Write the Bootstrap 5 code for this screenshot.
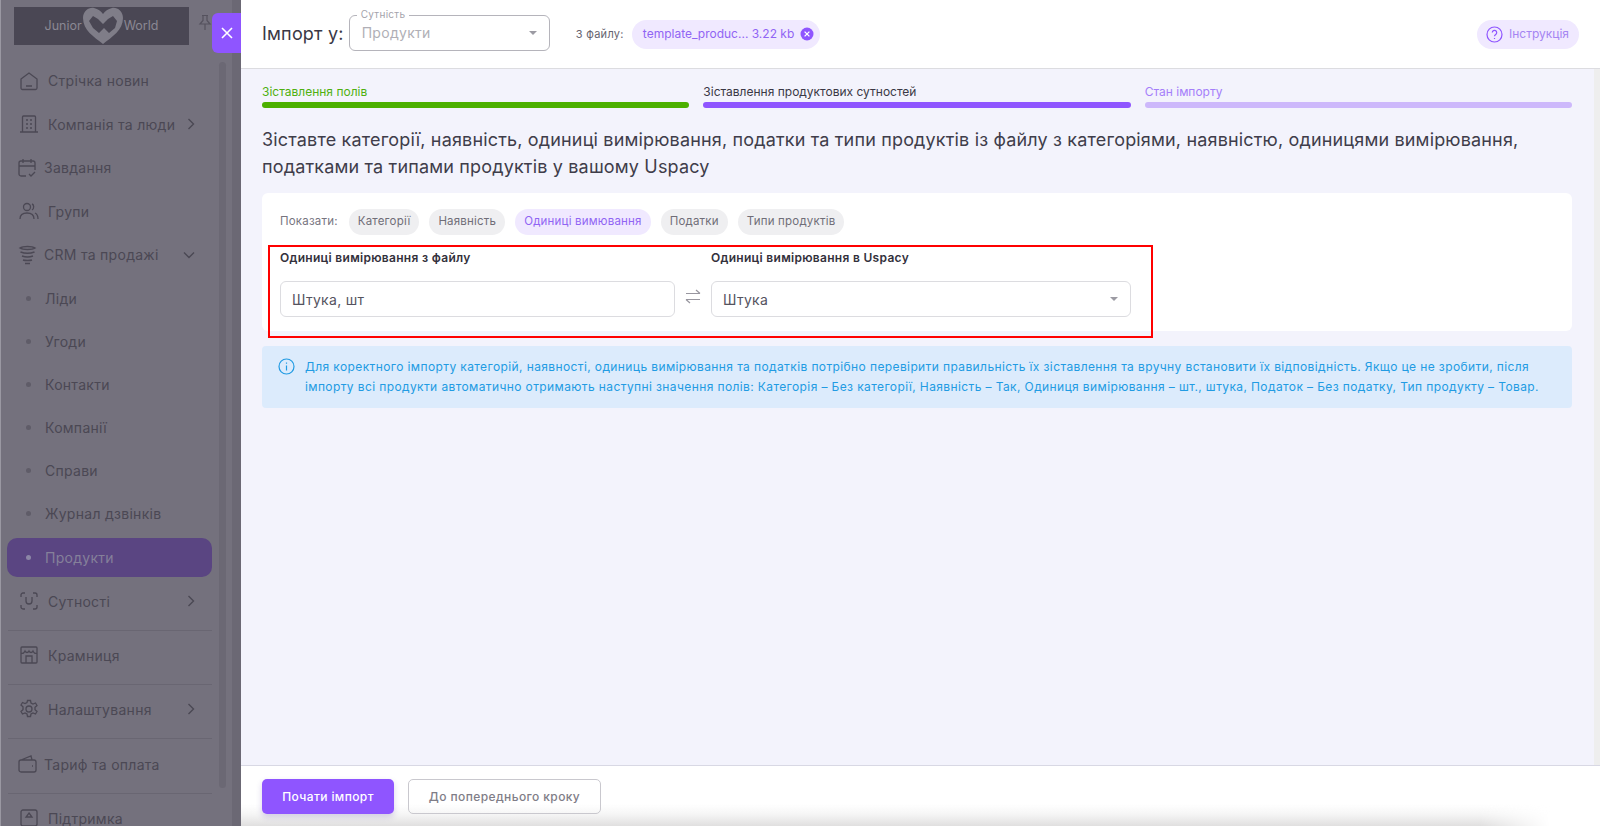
<!DOCTYPE html>
<html lang="uk">

<head>
	<meta charset="UTF-8">
	<meta name="viewport" content="width=device-width, initial-scale=1.0">
	<title>Імпорт</title>
	<link href="https://cdn.jsdelivr.net/npm/bootstrap@5.3.0/dist/css/bootstrap.min.css" rel="stylesheet">
	<style>
		html, body { height: 100%; overflow: hidden; }
		body { font-family: Inter, "Noto Sans", sans-serif; color: #3a3845; background: #fff; }
		.app-root { height: 826px; width: 1600px; overflow: hidden; position: relative; }

		/* dimmed sidebar */
		.side { width: 241px; flex: none; background: #74717d; color: #4b4854; border-left: 1px solid #9a98a2; position: relative; overflow: hidden; }
		.side-top { height: 59px; padding: 7px 0 0 13px; }
		.logo-box { width: 175px; height: 38px; background: #4a4754; color: #8a8893; font-size: 12.5px; }
		.pin-ic { margin: 7px 0 0 9px; }
		.side-scroll { position: absolute; left: 218px; top: 62px; width: 7px; height: 726px; background: #6b6874; border-radius: 4px; }
		.side-strip { position: absolute; left: 231px; top: 0; bottom: 0; width: 9px; background: #6b6874; }
		.side-list { width: 205px; margin: 0 0 0 6px; padding: 0; list-style: none; font-size: 14px; letter-spacing: .28px; white-space: nowrap; }
		.side-item { height: 43.5px; padding-left: 12px; gap: 9px; }
		.side-item.tight { gap: 7px; padding-left: 11px; }
		.side-item.sub { padding-left: 0; height: 43px; gap: 0; }
		.side-dot { width: 5px; height: 5px; background: #5f5c68; border-radius: 50%; margin: 0 14px 0 19px; }
		.side-item.on { background: #5a4582; border-radius: 10px; height: 39px; color: #85809a; margin: 3px 0 3px; }
		.side-item.on .side-dot { background: #8c86a6; }
		.side-chev { margin-left: auto; margin-right: 17px; }
		.side-rule { border-top: 1px solid #696672; margin: 7px 0 3px 1px; height: 0; }
		.side-rule.wide { margin-bottom: 4px; }
		.side-item.plain { height: 43px; }
		.side-ic { flex: none; }

		.close-tab { position: absolute; left: 212px; top: 13px; width: 29px; height: 40px; background: #8f55ff; border-radius: 6px 0 0 6px; z-index: 3; }

		/* import panel */
		.panel { min-width: 0; }
		.panel-head { height: 69px; flex: none; border-bottom: 1px solid #dcdce0; padding: 0 21px 0 21px; background: #fff; }
		.head-title { font-size: 18px; font-weight: 400; color: #3a3845; margin: 0 5px 0 0; white-space: nowrap; letter-spacing: .2px; }
		.entity-wrap { width: 201px; position: relative; margin-top: -3px; margin-right: 26px; }
		.entity-wrap .fake-select { height: 36px; border: 1px solid #b5b4bb; border-radius: 6px; padding: 0 12px; color: #b0afb6; font-size: 14px; letter-spacing: .3px; }
		.entity-tag { position: absolute; left: 8px; top: -7px; background: #fff; padding: 0 4px; font-size: 10px; line-height: 12px; color: #a4a3ab; letter-spacing: .3px; }
		.caret-dn { width: 0; height: 0; border-left: 4px solid transparent; border-right: 4px solid transparent; border-top: 4px solid #9c9ba3; }
		.file-lbl { font-size: 11px; color: #66646f; margin-right: 8px; white-space: nowrap; letter-spacing: .3px; }
		.file-chip { height: 29px; background: #f0e9ff; color: #9065f4; font-size: 12px; border-radius: 15px; padding: 0 6px 0 11px; gap: 6px; }
		.help-chip { height: 29px; background: #f0e9ff; color: #a585f2; font-size: 12px; border-radius: 15px; padding: 0 10px 0 9px; gap: 6px; margin-left: auto; }

		.panel-body { flex: 1 1 auto; background: #f3f3fc; padding: 15px 22px 0 21px; margin-right: 6px; min-height: 0; }
		.panel-gutter { position: absolute; right: 0; top: 69px; width: 6px; height: 696px; background: #eeeeee; }
		.step-row { gap: 14px; }
		.step-name { font-size: 12px; line-height: 15px; height: 18px; white-space: nowrap; }
		.step-bar { height: 6px; border-radius: 3px; }
		.step-a { color: #4fb010; } .step-a .step-bar { background: #4cb000; }
		.step-b { color: #3a3845; } .step-b .step-bar { background: #8f55ff; }
		.step-c { color: #a57ffa; } .step-c .step-bar { background: #cdb8fb; }
		.match-title { font-size: 18px; line-height: 27px; font-weight: 400; margin: 18px 0 13px; color: #3f3d4a; letter-spacing: .165px; }
		.match-card { background: #fff; border-radius: 6px; padding: 16px 18px 14px 18px; height: 138px; }
		.show-lbl { font-size: 11.5px; color: #77757f; margin-right: 11px; letter-spacing: .2px; }
		.pick { height: 26px; border-radius: 13px; padding: 0 9px; background: #efeff1; color: #706e78; font-size: 11.5px; margin-right: 10px; letter-spacing: .2px; }
		.pick.now { background: #f0e9ff; color: #9065f4; }
		.map-cols { margin-top: 15px; }
		.map-left { width: 395px; }
		.map-right { width: 420px; }
		.map-arrows { width: 36px; padding-top: 26px; }
		.map-lbl { font-size: 12px; font-weight: 600; line-height: 15px; color: #33313c; margin-bottom: 16px; letter-spacing: .3px; }
		.map-field { height: 36px; border: 1px solid #dcdce0; border-radius: 6px; padding: 0 12px 0 11px; font-size: 14px; color: #55535e; letter-spacing: .3px; }
		.red-frame { position: absolute; left: 268px; top: 245px; width: 885px; height: 93px; border: 2px solid #f00; pointer-events: none; }
		.hint-box { background: #dcebfc; color: #229be3; font-size: 12px; line-height: 20px; border-radius: 4px; margin-top: 15px; padding: 11px 16px 11px 16px; height: 62px; gap: 10px; letter-spacing: .39px; }
		.hint-box svg { flex: none; margin-top: 1px; }

		.panel-foot { height: 61px; flex: none; border-top: 1px solid #d8d8e4; padding: 13px 0 0 21px; gap: 14px; background: #fff; position: relative; }
		.panel-foot::after { content: ""; position: absolute; left: 0; right: 50px; bottom: 0; height: 22px; background: linear-gradient(transparent, #f6f6f6 45%, #e0dfdf); -webkit-mask-image: linear-gradient(to right, #000 calc(100% - 70px), transparent); mask-image: linear-gradient(to right, #000 calc(100% - 70px), transparent); }
		.go-btn { height: 35px; width: 132px; padding: 0; background: #8f55ff; border: 0; color: #fff; font-size: 12px; font-weight: 500; border-radius: 5px; letter-spacing: .4px; box-shadow: 0 3px 6px rgba(70, 40, 150, .2); position: relative; z-index: 1; }
		.back-btn { height: 35px; width: 193px; padding: 0; background: transparent; border: 1px solid #c9c8ce; color: #7f7d87; font-size: 12px; font-weight: 500; border-radius: 5px; letter-spacing: .4px; position: relative; z-index: 1; }
	</style>
</head>

<body>

	<div class="app-root d-flex">

		<!-- sidebar behind the overlay -->
		<aside class="side">
			<div class="side-top d-flex">
				<div class="logo-box d-flex align-items-center justify-content-center">
					<span>Junior</span>
					<svg width="42" height="38" viewBox="0 0 42 38"><path d="M21 37C12 30 1 23 1 11 1 4 7 0 12 1c4 1 7 3 9 6 2-3 5-5 9-6 5-1 11 3 11 10 0 12-11 19-20 26z" fill="#7f7d88"/><path d="M7 14l4-5 5 3 5 5 5-5 5-3 4 5-2 7-6 5-5-5-5 5-6-5z" fill="#4a4754"/></svg>
					<span>World</span>
				</div>
				<svg class="pin-ic" width="14" height="18" viewBox="0 0 14 18" fill="none" stroke="#55525e" stroke-width="1.2"><path d="M4 1.500h6M5 1.500v5L2 10h10L9 6.500v-5M7 10v6"/></svg>
			</div>
			<ul class="side-list">
				<li class="side-item d-flex align-items-center"><svg class="side-ic" width="20" height="20" viewBox="0 0 20 20" fill="none" stroke="#4b4854" stroke-width="1.3"><path d="M2 8l8-6 8 6v9a1.500 1.500 0 0 1-1.500 1.500h-13A1.500 1.500 0 0 1 2 17zM7 15h6"/></svg><span>Стрічка новин</span></li>
				<li class="side-item d-flex align-items-center"><svg class="side-ic" width="20" height="20" viewBox="0 0 20 20" fill="none" stroke="#4b4854" stroke-width="1.3"><path d="M3.500 18V3a1 1 0 0 1 1-1h11a1 1 0 0 1 1 1v15M1 18h18M7 6h2M11 6h2M7 10h2M11 10h2M7 14h2M11 14h2"/></svg><span>Компанія та люди</span><svg class="side-chev" width="8" height="12" viewBox="0 0 8 12" fill="none" stroke="#4b4854" stroke-width="1.400"><path d="M1.500 1l5 5-5 5"/></svg></li>
				<li class="side-item tight d-flex align-items-center"><svg class="side-ic" width="19" height="20" viewBox="0 0 19 20" fill="none" stroke="#4b4854" stroke-width="1.3"><path d="M8 18H3a2 2 0 0 1-2-2V5a2 2 0 0 1 2-2h12a2 2 0 0 1 2 2v7M1 8h16M5 1v4M13 1v4M11 16l2 2 4-4"/></svg><span>Завдання</span></li>
				<li class="side-item d-flex align-items-center"><svg class="side-ic" width="20" height="20" viewBox="0 0 20 20" fill="none" stroke="#4b4854" stroke-width="1.3"><circle cx="8" cy="6" r="3.500"/><path d="M1 18c0-4 3-6 7-6s7 2 7 6M13 3c2 .5 2.500 4.500 0 6M16 12c2 1 3 3 3 6"/></svg><span>Групи</span></li>
				<li class="side-item tight d-flex align-items-center"><svg class="side-ic" width="19" height="20" viewBox="0 0 19 20" fill="none" stroke="#4b4854" stroke-width="1.5"><path d="M2 3c3-2 12-2 15 0-3 2-12 2-15 0zM2.500 7c4 1.500 10 1.500 14 0M4 11c3 1 8 1 11 0M5 15c2 .7 7 .7 9 0M7 18.500h5"/></svg><span>CRM та продажі</span><svg class="side-chev" width="12" height="8" viewBox="0 0 12 8" fill="none" stroke="#4b4854" stroke-width="1.400"><path d="M1 1.500l5 5 5-5"/></svg></li>
				<li class="side-item sub d-flex align-items-center"><span class="side-dot"></span><span>Ліди</span></li>
				<li class="side-item sub d-flex align-items-center"><span class="side-dot"></span><span>Угоди</span></li>
				<li class="side-item sub d-flex align-items-center"><span class="side-dot"></span><span>Контакти</span></li>
				<li class="side-item sub d-flex align-items-center"><span class="side-dot"></span><span>Компанії</span></li>
				<li class="side-item sub d-flex align-items-center"><span class="side-dot"></span><span>Справи</span></li>
				<li class="side-item sub d-flex align-items-center"><span class="side-dot"></span><span>Журнал дзвінків</span></li>
				<li class="side-item sub on d-flex align-items-center"><span class="side-dot"></span><span>Продукти</span></li>
				<li class="side-item plain d-flex align-items-center"><svg class="side-ic" width="20" height="20" viewBox="0 0 20 20" fill="none" stroke="#4b4854" stroke-width="1.3"><path d="M2 6V4a2 2 0 0 1 2-2h2M14 2h2a2 2 0 0 1 2 2v2M18 14v2a2 2 0 0 1-2 2h-2M6 18H4a2 2 0 0 1-2-2v-2M7 6v4a3 3 0 0 0 6 0V6"/></svg><span>Сутності</span><svg class="side-chev" width="8" height="12" viewBox="0 0 8 12" fill="none" stroke="#4b4854" stroke-width="1.400"><path d="M1.500 1l5 5-5 5"/></svg></li>
				<li class="side-rule"></li>
				<li class="side-item plain d-flex align-items-center"><svg class="side-ic" width="20" height="20" viewBox="0 0 20 20" fill="none" stroke="#4b4854" stroke-width="1.3"><path d="M3 2h14a1 1 0 0 1 1 1v14a1 1 0 0 1-1 1H3a1 1 0 0 1-1-1V3a1 1 0 0 1 1-1zM2 8c2 1 3 0 4-2 1 2 3 2 4 0 1 2 3 2 4 0 1 2 2 3 4 2M7 18v-7h6v7"/></svg><span>Крамниця</span></li>
				<li class="side-rule"></li>
				<li class="side-item plain d-flex align-items-center"><svg class="side-ic" width="20" height="20" viewBox="0 0 20 20" fill="none" stroke="#4b4854" stroke-width="1.3"><circle cx="10" cy="10" r="3"/><path d="M8.500 1.500h3l.5 2.500 2 1 2.500-1 1.500 2.500-2 1.700v2.600l2 1.700-1.500 2.500-2.500-1-2 1-.5 2.500h-3l-.5-2.500-2-1-2.500 1-1.500-2.500 2-1.700V7.700l-2-1.700L3.500 3.500l2.500 1 2-1z"/></svg><span>Налаштування</span><svg class="side-chev" width="8" height="12" viewBox="0 0 8 12" fill="none" stroke="#4b4854" stroke-width="1.400"><path d="M1.500 1l5 5-5 5"/></svg></li>
				<li class="side-rule wide"></li>
				<li class="side-item plain tight d-flex align-items-center"><svg class="side-ic" width="19" height="20" viewBox="0 0 19 20" fill="none" stroke="#4b4854" stroke-width="1.3"><path d="M3 6h13a2 2 0 0 1 2 2v8a2 2 0 0 1-2 2H3a2 2 0 0 1-2-2V8a2 2 0 0 1 2-2zM3 6l10-4 1 4M14 12h1"/></svg><span>Тариф та оплата</span></li>
				<li class="side-rule"></li>
				<li class="side-item plain d-flex align-items-center"><svg class="side-ic" width="20" height="20" viewBox="0 0 20 20" fill="none" stroke="#4b4854" stroke-width="1.3"><rect x="2" y="2" width="16" height="16" rx="2"/><path d="M10 5l3 4H7z"/></svg><span>Підтримка</span></li>
			</ul>
			<div class="side-scroll"></div>
			<div class="side-strip"></div>
		</aside>

		<div class="close-tab d-flex align-items-center justify-content-center">
			<svg width="12" height="12" viewBox="0 0 12 12" fill="none" stroke="#fff" stroke-width="1.600"><path d="M1 1l10 10M11 1L1 11"/></svg>
		</div>

		<!-- import panel -->
		<main class="panel flex-grow-1 d-flex flex-column">
			<header class="panel-head d-flex align-items-center">
				<h1 class="head-title">Імпорт у:</h1>
				<div class="entity-wrap">
					<div class="fake-select d-flex align-items-center justify-content-between"><span>Продукти</span><span class="caret-dn"></span></div>
					<span class="entity-tag">Сутність</span>
				</div>
				<span class="file-lbl">З файлу:</span>
				<span class="file-chip d-flex align-items-center"><span>template_produc... 3.22 kb</span>
					<svg width="14" height="14" viewBox="0 0 14 14"><circle cx="7" cy="7" r="6.500" fill="#8f55ff"/><path d="M4.600 4.600l4.800 4.800M9.400 4.600l-4.800 4.800" stroke="#fff" stroke-width="1.300"/></svg>
				</span>
				<span class="help-chip d-flex align-items-center">
					<svg width="17" height="17" viewBox="0 0 17 17" fill="none" stroke="#8f55ff" stroke-width="1.200"><circle cx="8.500" cy="8.500" r="7.500"/><path d="M6.300 6.500a2.200 2.200 0 1 1 3.400 1.900c-.8.500-1.200 1-1.200 1.900"/><path d="M8.500 12v1"/></svg>
					<span>Інструкція</span>
				</span>
			</header>

			<section class="panel-body">
				<div class="d-flex step-row">
					<div class="step-a flex-fill w-100"><div class="step-name">Зіставлення полів</div><div class="step-bar"></div></div>
					<div class="step-b flex-fill w-100"><div class="step-name">Зіставлення продуктових сутностей</div><div class="step-bar"></div></div>
					<div class="step-c flex-fill w-100"><div class="step-name">Стан імпорту</div><div class="step-bar"></div></div>
				</div>

				<h2 class="match-title">Зіставте категорії, наявність, одиниці вимірювання, податки та типи продуктів із файлу з категоріями, наявністю, одиницями вимірювання, податками та типами продуктів у вашому Uspacy</h2>

				<div class="match-card">
					<div class="d-flex align-items-center">
						<span class="show-lbl">Показати:</span>
						<span class="pick d-flex align-items-center">Категорії</span>
						<span class="pick d-flex align-items-center">Наявність</span>
						<span class="pick now d-flex align-items-center">Одиниці вимювання</span>
						<span class="pick d-flex align-items-center">Податки</span>
						<span class="pick d-flex align-items-center">Типи продуктів</span>
					</div>
					<div class="map-cols d-flex">
						<div class="map-left">
							<div class="map-lbl">Одиниці вимірювання з файлу</div>
							<div class="map-field d-flex align-items-center">Штука, шт</div>
						</div>
						<div class="map-arrows d-flex justify-content-center align-items-center">
							<svg width="16" height="15" viewBox="0 0 16 15" fill="none" stroke="#98969f" stroke-width="1.200"><path d="M1 4.500h14M11 1l4 3.500M15 10.500H1M5 14l-4-3.500"/></svg>
						</div>
						<div class="map-right">
							<div class="map-lbl">Одиниці вимірювання в Uspacy</div>
							<div class="map-field d-flex align-items-center justify-content-between"><span>Штука</span><span class="caret-dn"></span></div>
						</div>
					</div>
				</div>

				<div class="hint-box d-flex">
					<svg width="17" height="17" viewBox="0 0 17 17" fill="none" stroke="#229be3" stroke-width="1.200"><circle cx="8.500" cy="8.500" r="7.500"/><path d="M8.500 7.500v5M8.500 4.500v1.200"/></svg>
					<div>Для коректного імпорту категорій, наявності, одиниць вимірювання та податків потрібно перевірити правильність їх зіставлення та вручну встановити їх відповідність. Якщо це не зробити, після імпорту всі продукти автоматично отримають наступні значення полів: Категорія – Без категорії, Наявність – Так, Одиниця вимірювання – шт., штука, Податок – Без податку, Тип продукту – Товар.</div>
				</div>
			</section>

			<footer class="panel-foot d-flex align-items-start">
				<button type="button" class="btn go-btn">Почати імпорт</button>
				<button type="button" class="btn back-btn">До попереднього кроку</button>
			</footer>
		</main>

		<div class="panel-gutter"></div>
		<div class="red-frame"></div>
	</div>

	<script src="https://cdn.jsdelivr.net/npm/bootstrap@5.3.0/dist/js/bootstrap.bundle.min.js"></script>

</body>

</html>
